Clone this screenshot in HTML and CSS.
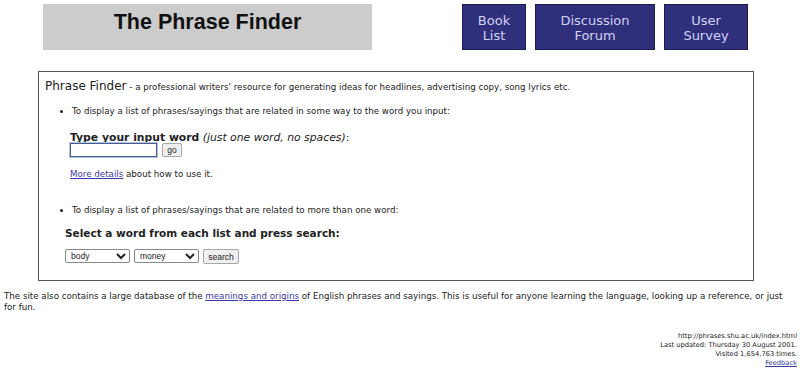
FILE: index.html
```html
<!DOCTYPE html>
<html>
<head>
<meta charset="utf-8">
<title>The Phrase Finder</title>
<link rel="stylesheet" href="styles.css">
</head>
<body>
<div class="header">
  <div class="title-box"><h1 class="title">The Phrase Finder</h1></div>
  <div class="nav">
    <a class="nav-btn nav-book" href="#">Book<br>List</a>
    <a class="nav-btn nav-forum" href="#">Discussion<br>Forum</a>
    <a class="nav-btn nav-survey" href="#">User<br>Survey</a>
  </div>
</div>

<div class="main-box">
  <p class="intro"><span class="intro-name">Phrase Finder</span> - a professional writers' resource for generating ideas for headlines, advertising copy, song lyrics etc.</p>
  <ul class="list">
    <li>To display a list of phrases/sayings that are related in some way to the word you input:</li>
  </ul>
  <div class="single">
    <div class="prompt"><b>Type your input word</b> <i>(just one word, no spaces)</i>:</div>
    <div class="input-row">
      <input class="word-input" type="text">
      <button class="btn go-btn">go</button>
    </div>
    <p class="details"><a href="#">More details</a> about how to use it.</p>
  </div>
  <ul class="list list2">
    <li>To display a list of phrases/sayings that are related to more than one word:</li>
  </ul>
  <div class="multi">
    <div class="select-prompt">Select a word from each list and press search:</div>
    <div class="select-row">
      <select class="word-select"><option>body</option></select>
      <select class="word-select"><option>money</option></select>
      <button class="btn search-btn">search</button>
    </div>
  </div>
</div>

<p class="about">The site also contains a large database of the <a href="#">meanings and origins</a> of English phrases and sayings. This is useful for anyone learning the language, looking up a reference, or just for fun.</p>

<div class="footer">
  <div>http://phrases.shu.ac.uk/index.html</div>
  <div>Last updated: Thursday 30 August 2001.</div>
  <div>Visited 1,654,763 times.</div>
  <div><a href="#">Feedback</a></div>
</div>
</body>
</html>
```

FILE: styles.css
```css
html, body {
  margin: 0;
  padding: 0;
  background: #ffffff;
}
body {
  font-family: "DejaVu Sans", Verdana, sans-serif;
  color: #222222;
  padding: 4px 3px 0 4px;
}
a {
  color: #3a3aa8;
}
.header {
  display: flex;
  align-items: flex-start;
  padding-left: 39px;
}
.title-box {
  width: 329px;
  height: 46px;
  background: #cccccc;
  box-sizing: border-box;
  padding-top: 5px;
  text-align: center;
}
.title {
  margin: 0;
  font-family: "Liberation Sans", Arial, sans-serif;
  font-weight: bold;
  font-size: 21.5px;
  line-height: 27px;
  color: #111111;
}
.nav {
  display: flex;
  gap: 9px;
  margin-left: 90px;
}
.nav-btn {
  display: block;
  box-sizing: border-box;
  height: 46px;
  background: #2f2f7c;
  border: 1px solid #1c1c55;
  color: #d2d2f2;
  text-decoration: none;
  text-align: center;
  font-size: 13px;
  line-height: 15px;
  padding-top: 8px;
}
.nav-book { width: 64px; }
.nav-forum { width: 120px; }
.nav-survey { width: 84px; }

.main-box {
  margin: 21px 0 0 34px;
  width: 716px;
  height: 210px;
  box-sizing: border-box;
  border: 1px solid #555555;
  padding: 7px 6px 0 6px;
}
.intro {
  margin: 0;
  font-size: 8.7px;
  line-height: 14px;
}
.intro-name {
  font-size: 12px;
}
.list {
  margin: 11px 0 0 0;
  padding-left: 27px;
  font-size: 8.7px;
  line-height: 12px;
}
.list2 {
  margin-top: 24px;
}
.single {
  padding-left: 25px;
  margin-top: 14px;
}
.prompt {
  font-size: 10.8px;
  line-height: 14px;
}
.input-row {
  display: flex;
  gap: 5px;
  align-items: center;
  margin-top: -2px;
}
.word-input {
  width: 87px;
  height: 14px;
  box-sizing: border-box;
  border: 1px solid #4a5a80;
  outline: 1px solid #a9c4ee;
  padding: 0;
  margin: 0;
}
.btn {
  font-family: "Liberation Sans", Arial, sans-serif;
  font-size: 8.5px;
  height: 14px;
  box-sizing: border-box;
  padding: 0 3px;
  margin: 0;
  background: #efefef;
  border: 1px solid #a8a8a8;
  border-radius: 2px;
  color: #222222;
}
.go-btn {
  width: 20px;
}
.details {
  margin: 11px 0 0 0;
  font-size: 8.7px;
  line-height: 12px;
}
.multi {
  padding-left: 20px;
  margin-top: 10px;
}
.select-prompt {
  font-weight: bold;
  font-size: 10.5px;
  line-height: 14px;
}
.select-row {
  display: flex;
  gap: 4px;
  margin-top: 9px;
}
.word-select {
  width: 65px;
  height: 14px;
  font-family: "Liberation Sans", Arial, sans-serif;
  font-size: 8.5px;
  padding: 0 1px;
  margin: 0;
  border: 1px solid #8a8a8a;
  border-radius: 2px;
  background: #ffffff;
  color: #222222;
}
.search-btn {
  width: 36px;
  height: 15px;
}
.about {
  margin: 10px 0 0 0;
  font-size: 8.7px;
  line-height: 10.5px;
}
.footer {
  margin-top: 20px;
  text-align: right;
  font-size: 6.7px;
  line-height: 9px;
}
```
